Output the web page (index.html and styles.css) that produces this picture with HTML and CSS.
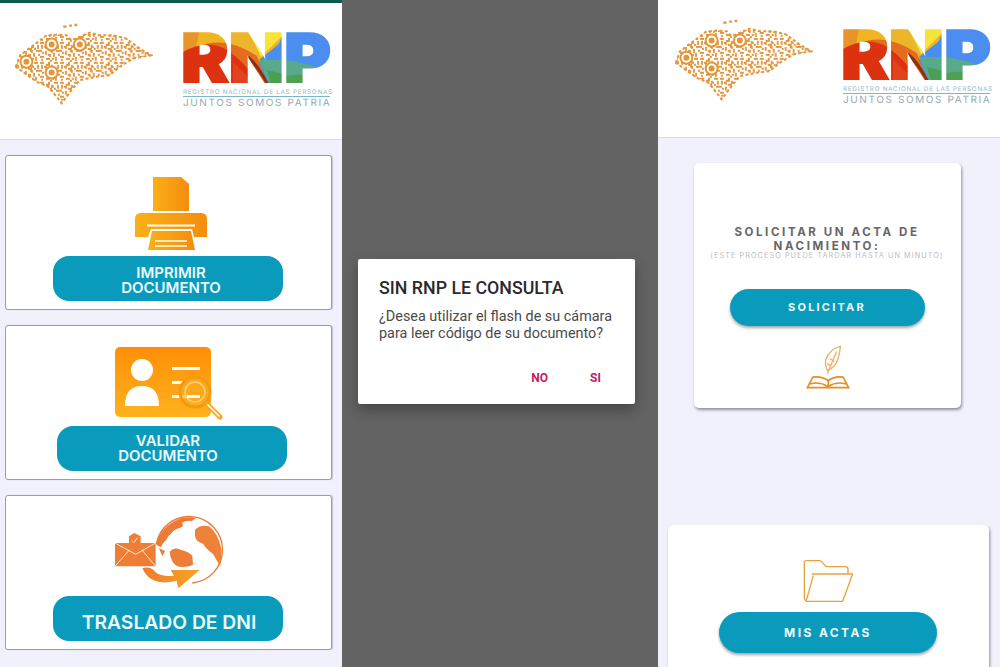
FILE: index.html
```html
<!DOCTYPE html>
<html lang="es">
<head>
    <meta charset="UTF-8">
    <meta name="viewport" content="width=device-width, initial-scale=1.0">
    <title>RNP</title>
    <link rel="stylesheet" href="styles.css">
</head>
<body>

    <svg class="defs" width="0" height="0" aria-hidden="true">
        <defs>
            <pattern id="rnpColors" patternUnits="userSpaceOnUse" width="147" height="52" x="0" y="-1">
                <rect width="147" height="52" fill="#4b8ef0"/>
                <path d="M0 0H101L88 30H0Z" fill="#efb622"/>
                <path d="M0 0H16L12 22H0Z" fill="#e8942a"/>
                <path d="M66 0H103L78 25Z" fill="#f8e23c"/>
                <path d="M48 0H66L76 24L48 14Z" fill="#edb52a"/>
                <path d="M14 16Q40 2 74 24L84 52H50Z" fill="#e56b1f"/>
                <path d="M0 52V20Q24 6 44 18Q62 30 76 52Z" fill="#dc3210"/>
                <path d="M50 30L72 52H50Z" fill="#e2431c"/>
                <path d="M76 28L101 8V28Z" fill="#4b8ef0"/>
                <path d="M76 28H101Q125 30 147 42V52H86Z" fill="#59a98c"/>
                <path d="M84 38L101 42V52H88Z" fill="#4a9f55"/>
                <path d="M101 44Q125 40 147 46V52H101Z" fill="#4fa050"/>
                <path d="M66 24Q76 32 86 52H83Q74 36 64 26Z" fill="#8c2f14"/>
            </pattern>
            <pattern id="qrMaze" patternUnits="userSpaceOnUse" width="60" height="60">
                <path d="M0 3h12M24 3h6M42 3h12M6 9v12M18 9h12M36 9v6h6M54 9v12M12 15h6v6M24 21h12M42 21h6M0 27h6M18 27v12M30 27h6v6M48 27h12M6 33h6M24 39h6v6M42 33v12M54 39h6M0 45h12M18 51h12M36 51h6M48 45v12M6 51v6M30 57h6" fill="none" stroke="#e2953a" stroke-width="5.500"/>
            </pattern>
            <linearGradient id="printerFill" x1="0" x2="1" y1="0" y2="0">
                <stop offset="0" stop-color="#fbb017"/>
                <stop offset="1" stop-color="#f48d0e"/>
            </linearGradient>
            <linearGradient id="cardFill" x1="0" x2="0" y1="0" y2="1">
                <stop offset="0" stop-color="#fe8f08"/>
                <stop offset="1" stop-color="#ffb21c"/>
            </linearGradient>
            <linearGradient id="arrowFill" x1="0" x2="1" y1="0" y2="0">
                <stop offset="0" stop-color="#ee7c33"/>
                <stop offset="1" stop-color="#f9a51f"/>
            </linearGradient>
            <symbol id="hondurasMap" viewBox="45 60 415 250">
                <path d="M47 195L60 160L100 130L140 100L175 98L200 100L215 115L250 100L270 92L300 100L340 100L380 110L420 140L455 160L400 170L360 195L330 220L290 225L240 235L215 265L185 305L170 285L145 255L110 240L75 215Z" fill="url(#qrMaze)" stroke="#e2953a" stroke-width="6" stroke-dasharray="9 7"/>
                <path d="M190 74h10M208 71h8M224 69h8" stroke="#e2953a" stroke-width="7"/>
                <g fill="#fff" stroke="#e2953a" stroke-width="6">
                    <circle cx="155" cy="128" r="18"/>
                    <circle cx="240" cy="128" r="18"/>
                    <circle cx="79" cy="180" r="18"/>
                    <circle cx="155" cy="212" r="18"/>
                </g>
                <g fill="#e2953a">
                    <circle cx="155" cy="128" r="9"/>
                    <circle cx="240" cy="128" r="9"/>
                    <circle cx="79" cy="180" r="9"/>
                    <circle cx="155" cy="212" r="9"/>
                </g>
            </symbol>
        </defs>
    </svg>

    <!-- Pantalla de documentos -->
    <section class="screen screen-docs">
        <header class="brand-bar">
            <svg class="map" width="138" height="83"><use href="#hondurasMap"/></svg>
            <div class="logo">
                <svg class="logo-mark" width="147" height="50" viewBox="0 0 147 50">
                    <text class="logo-letters" x="-2" y="49" textLength="150" lengthAdjust="spacingAndGlyphs">RNP</text>
                </svg>
                <span class="logo-name">REGISTRO NACIONAL DE LAS PERSONAS</span>
                <span class="logo-motto">JUNTOS SOMOS PATRIA</span>
            </div>
        </header>
        <main class="doc-list">
            <article class="doc-card">
                <svg class="icon icon-printer" width="72" height="73" viewBox="135 177 72 73">
                    <path d="M153 177H181L189 184V211H153Z" fill="url(#printerFill)"/>
                    <path d="M135 237V219Q135 213 141 213H201Q207 213 207 219V237H194L192 229H151L148 237Z" fill="url(#printerFill)"/>
                    <path d="M147 225.500H195" stroke="#fff" stroke-width="2"/>
                    <path d="M152 231H191L195 250H148Z" fill="url(#printerFill)"/>
                    <path d="M155 241H187M155 246H187" stroke="#fff" stroke-width="1.600"/>
                </svg>
                <button class="doc-button doc-button-print">IMPRIMIR<br>DOCUMENTO</button>
            </article>
            <article class="doc-card">
                <svg class="icon icon-id" width="108" height="73" viewBox="115 347 108 73">
                    <rect x="115" y="347" width="96" height="70" rx="5" fill="url(#cardFill)"/>
                    <circle cx="142" cy="370" r="11" fill="#fff"/>
                    <path d="M125 406Q125 386 142 386Q159 386 159 406Z" fill="#fff"/>
                    <path d="M172 368.500H200M172 382.500H184M172 396.500H200" stroke="#fff" stroke-width="3"/>
                    <circle cx="195" cy="392" r="15" fill="#fdab1f" fill-opacity=".6" stroke="#f39a15" stroke-width="3"/>
                    <circle cx="195" cy="392" r="10" fill="none" stroke="#fbd27c" stroke-width="1.500"/>
                    <path d="M187 396.500H200" stroke="#fff" stroke-width="3"/>
                    <path d="M207 404L220 417" stroke="#f2a72c" stroke-width="5" stroke-linecap="round"/>
                    <path d="M208 405L219 416" stroke="#fff" stroke-width="1.500" stroke-linecap="round"/>
                </svg>
                <button class="doc-button doc-button-shift">VALIDAR<br>DOCUMENTO</button>
            </article>
            <article class="doc-card">
                <svg class="icon icon-globe" width="110" height="76" viewBox="15 15 330 228">
                    <path d="M250 222A100 100 0 1 0 142 105" fill="none" stroke="#ec7a36" stroke-width="4"/>
                    <path d="M142 108Q150 55 215 28Q240 22 262 26L248 36Q230 34 218 42Q228 50 214 56Q194 60 186 74Q176 80 172 92Q162 100 156 114Z" fill="#ec7a36"/>
                    <path d="M150 118L168 126L160 142Z" fill="#ec7a36"/>
                    <path d="M258 62Q275 45 300 52Q325 70 336 115Q340 150 332 172Q322 150 312 135Q290 118 282 104Q262 100 258 82Z" fill="#ee8238"/>
                    <path d="M182 128Q195 112 215 122Q240 128 250 140L252 168Q225 178 205 172Q185 160 182 128Z" fill="#ee7d38"/>
                    <path d="M18 102H140V172H18Z" fill="#ee7d35"/>
                    <path d="M18 102L80 136L140 102M18 172L62 122M140 172L98 122" fill="none" stroke="#fde5d2" stroke-width="3"/>
                    <path d="M76 72L95 82V102L78 112L60 102V82Z" fill="#ee7d35"/>
                    <path d="M68 94L75 101L85 86" fill="none" stroke="#fde5d2" stroke-width="3"/>
                    <path d="M100 178Q125 170 140 190Q160 205 195 200L185 183H272L208 238L203 215Q125 235 100 178Z" fill="url(#arrowFill)"/>
                </svg>
                <button class="doc-button doc-button-large">TRASLADO DE DNI</button>
            </article>
        </main>
    </section>

    <!-- Dialogo del flash -->
    <section class="screen screen-dim">
        <div class="dialog">
            <h2 class="dialog-title">SIN RNP LE CONSULTA</h2>
            <p class="dialog-text">¿Desea utilizar el flash de su cámara para leer código de su documento?</p>
            <div class="dialog-actions">
                <button class="dialog-action">NO</button>
                <button class="dialog-action">SI</button>
            </div>
        </div>
    </section>

    <!-- Pantalla de actas -->
    <section class="screen screen-actas">
        <header class="brand-bar brand-bar-actas">
            <svg class="map" width="138" height="83"><use href="#hondurasMap"/></svg>
            <div class="logo">
                <svg class="logo-mark" width="147" height="50" viewBox="0 0 147 50">
                    <text class="logo-letters" x="-2" y="49" textLength="150" lengthAdjust="spacingAndGlyphs">RNP</text>
                </svg>
                <span class="logo-name">REGISTRO NACIONAL DE LAS PERSONAS</span>
                <span class="logo-motto">JUNTOS SOMOS PATRIA</span>
            </div>
        </header>
        <main class="acta-list">
            <article class="acta-card acta-request">
                <h3 class="acta-title">SOLICITAR UN ACTA DE NACIMIENTO:</h3>
                <p class="acta-note">(ESTE PROCESO PUEDE TARDAR HASTA UN MINUTO)</p>
                <button class="acta-button acta-button-small">SOLICITAR</button>
                <svg class="icon-feather" width="44" height="44" viewBox="380 585 130 130">
                    <g fill="none" stroke="#eeb06a" stroke-width="4">
                        <path d="M482 589Q450 595 438 630Q436 650 444 660Q470 650 476 620Q480 605 482 589Z"/>
                        <path d="M470 605L443 670M443 640L455 648M450 625L464 634"/>
                    </g>
                    <g fill="none" stroke="#e78d24" stroke-width="5">
                        <path d="M384 711H506L490 680Q465 676 446 690Q425 676 400 680Z"/>
                        <path d="M392 700Q420 692 445 708Q470 692 498 700M446 690V708"/>
                    </g>
                </svg>
            </article>
            <article class="acta-card acta-files">
                <svg class="icon-folder" width="51" height="44" viewBox="433 145 153 132">
                    <g fill="none" stroke="#e8a33e" stroke-width="4" stroke-linejoin="round">
                        <path d="M442 270Q437 268 437 262V156Q437 150 443 150H482Q488 150 491 155L502 168H560Q568 168 568 176V190"/>
                        <path d="M460 190H582L552 272H442L464 195"/>
                    </g>
                </svg>
                <button class="acta-button">MIS ACTAS</button>
            </article>
        </main>
    </section>

</body>
</html>
```

FILE: styles.css
```css
* {
    box-sizing: border-box;
}

body {
    margin: 0;
    width: 1000px;
    height: 667px;
    display: flex;
    overflow: hidden;
    background: #636363;
    font-family: 'Inter', 'Liberation Sans', sans-serif;
}

button {
    border: none;
    padding: 0;
    font-family: inherit;
}

.defs {
    position: absolute;
}

.screen {
    height: 667px;
    overflow: hidden;
    background: #f1f1fc;
}

.screen-docs,
.screen-actas {
    width: 342px;
    flex: none;
}

/* Cabecera */
.brand-bar {
    height: 140px;
    display: flex;
    align-items: flex-start;
    gap: 30px;
    padding: 22px 0 0 15px;
    background: #fff;
    border-top: 3px solid #0b5b4c;
    border-bottom: 1px solid #dcdce4;
}

.brand-bar .map {
    margin-top: -3px;
}

.brand-bar-actas {
    height: 138px;
    gap: 30px;
    padding: 18px 0 0 17px;
    border-top: none;
}

.brand-bar-actas .map {
    margin-top: 0;
}

.logo {
    display: flex;
    flex-direction: column;
    width: 147px;
    margin-top: 8px;
    text-rendering: geometricPrecision;
}

.brand-bar-actas .logo {
    margin-top: 12px;
}

.logo-mark {
    display: block;
    overflow: visible;
}

.logo-letters {
    font-family: 'Inter', 'Liberation Sans', sans-serif;
    font-size: 67px;
    font-weight: 900;
    fill: url(#rnpColors);
    stroke: url(#rnpColors);
    stroke-width: 2px;
}

.logo-name {
    margin-top: 5px;
    border-bottom: 1px solid #7cb6c6;
    font-size: 6.300px;
    line-height: 8px;
    letter-spacing: .75px;
    color: #93bccb;
    white-space: nowrap;
}

.logo-motto {
    font-size: 10px;
    line-height: 12.500px;
    letter-spacing: 1.600px;
    color: #8fabb7;
    white-space: nowrap;
}

/* Tarjetas de documentos */
.doc-list {
    display: flex;
    flex-direction: column;
    gap: 15px;
    padding: 15px 10px 0 5px;
}

.doc-card {
    height: 155px;
    display: flex;
    flex-direction: column;
    align-items: center;
    justify-content: flex-end;
    gap: 6px;
    padding-bottom: 8px;
    background: #fff;
    border: 1px solid #9d9da8;
    border-radius: 3px;
    box-shadow: 1px 0 1px #c4c4d2;
}

.icon {
    display: block;
}

.icon-printer {
    margin-left: 4px;
}

.icon-globe {
    margin-left: 1px;
}

.doc-button {
    width: 230px;
    height: 45px;
    margin-right: 1px;
    background: #0a9bbc;
    border-radius: 16px;
    color: #eafafd;
    font-size: 15px;
    font-weight: 600;
    line-height: 15px;
}

.doc-button-print {
    padding: 2px 0 0 6px;
}

.doc-button-shift {
    margin-right: 0;
    margin-left: 7px;
    padding: 0 8px 2px 0;
}

.doc-button-large {
    padding: 8px 0 0 2px;
    font-size: 19.300px;
    font-weight: 600;
}

/* Dialogo */
.screen-dim {
    width: 316px;
    flex: none;
    display: flex;
    justify-content: center;
    padding-top: 259px;
    background: #636363;
}

.dialog {
    width: 277px;
    height: 145px;
    margin-right: 7px;
    padding: 19px 21px 0;
    background: #fff;
    border-radius: 2px;
    box-shadow: 0 6px 14px rgba(0, 0, 0, 0.3);
    font-family: 'Roboto', 'Liberation Sans', sans-serif;
}

.dialog-title {
    margin: 0;
    font-size: 17.800px;
    font-weight: 500;
    line-height: 20px;
    color: #2a2a2a;
}

.dialog-text {
    margin: 10px 0 0;
    font-size: 14.400px;
    line-height: 17px;
    color: #4a4a4a;
}

.dialog-actions {
    display: flex;
    justify-content: flex-end;
    gap: 42px;
    margin-top: 29px;
    padding-right: 13px;
}

.dialog-action {
    background: none;
    font-family: inherit;
    font-size: 12px;
    font-weight: 700;
    line-height: 14px;
    color: #c2205f;
}

/* Actas */
.acta-list {
    display: flex;
    flex-direction: column;
    align-items: center;
    padding: 25px 2px 0 0;
}

.acta-card {
    display: flex;
    flex-direction: column;
    align-items: center;
    background: #fff;
    border-radius: 5px;
    box-shadow: 1px 2px 3px rgba(60, 60, 80, 0.55);
}

.acta-request {
    width: 267px;
    height: 245px;
    margin-right: 2px;
    padding-top: 62px;
}

.acta-title {
    width: 210px;
    margin: 0;
    text-align: center;
    font-size: 11.500px;
    font-weight: 700;
    line-height: 14px;
    letter-spacing: 2.600px;
    color: #666;
}

.acta-note {
    margin: -1px 0 0;
    font-size: 7.300px;
    line-height: 8px;
    letter-spacing: 1.050px;
    color: #bcbcc2;
    white-space: nowrap;
}

.acta-button {
    width: 218px;
    height: 41px;
    background: #0a9bbc;
    border-radius: 21px;
    box-shadow: 0 2px 3px rgba(40, 60, 80, 0.45);
    color: #eafafd;
    font-size: 12px;
    font-weight: 700;
    letter-spacing: 2.400px;
}

.acta-button-small {
    width: 195px;
    height: 37px;
    margin-top: 29px;
    padding-bottom: 2px;
    font-size: 11px;
    letter-spacing: 2.200px;
}

.icon-feather {
    display: block;
    margin-top: 19px;
    margin-left: 2px;
}

.acta-files {
    width: 321px;
    height: 160px;
    margin-top: 117px;
    padding-top: 34px;
}

.icon-folder {
    display: block;
    margin-bottom: 9px;
}
```
